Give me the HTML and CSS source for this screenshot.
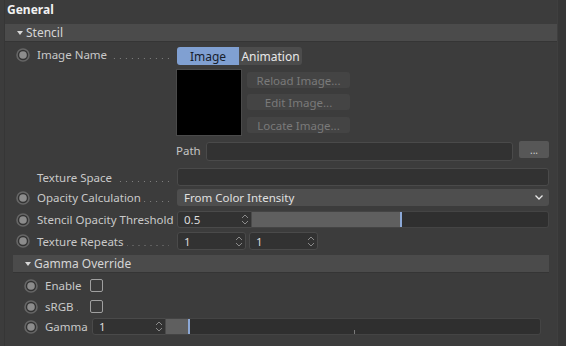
FILE: index.html
```html
<!DOCTYPE html>
<html>
<head>
<meta charset="utf-8">
<link rel="stylesheet" href="styles.css">
</head>
<body>
<div class="wrap">
  <div class="panel">
    <div class="title">General</div>

    <div class="ghead">
      <svg class="tri" width="6" height="4" viewBox="0 0 6 4"><path d="M0 0H6L3 4Z" fill="#d8d8d8"/></svg>
      <span>Stencil</span>
    </div>

    <div class="row r-img">
      <div class="lab lab-top">
        <svg class="radio" viewBox="0 0 14 14"><circle cx="7" cy="7" r="6" fill="#333" stroke="#666" stroke-width="1.6"/><circle cx="7" cy="7" r="3.8" fill="#8c8c8c"/></svg>
        <span class="name">Image Name</span><span class="dots"></span>
      </div>
      <div class="val">
        <div class="tabs">
          <div class="tab tab-on">Image</div>
          <div class="tab tab-off">Animation</div>
        </div>
      </div>
    </div>

    <div class="row r-body">
      <div class="lab"></div>
      <div class="val body">
        <div class="thumb"></div>
        <div class="btns">
          <div class="btn">Reload Image...</div>
          <div class="btn">Edit Image...</div>
          <div class="btn">Locate Image...</div>
        </div>
      </div>
    </div>

    <div class="row r-path">
      <div class="lab"></div>
      <div class="val path">
        <span class="plab">Path</span>
        <div class="field pfield"></div>
        <div class="more">...</div>
      </div>
    </div>

    <div class="row r-tex">
      <div class="lab">
        <span class="sp"></span>
        <span class="name">Texture Space</span><span class="dots"></span>
      </div>
      <div class="val"><div class="field wide"></div></div>
    </div>

    <div class="row r-opc">
      <div class="lab">
        <svg class="radio" viewBox="0 0 14 14"><circle cx="7" cy="7" r="6" fill="#333" stroke="#666" stroke-width="1.6"/><circle cx="7" cy="7" r="3.8" fill="#8c8c8c"/></svg>
        <span class="name">Opacity Calculation</span><span class="dots"></span>
      </div>
      <div class="val">
        <div class="drop">
          <span>From Color Intensity</span>
          <svg width="8" height="5" viewBox="0 0 8 5"><path d="M0.5 0.5L4 4L7.5 0.5" fill="none" stroke="#e8e8e8" stroke-width="1.3"/></svg>
        </div>
      </div>
    </div>

    <div class="row r-thr">
      <div class="lab">
        <svg class="radio" viewBox="0 0 14 14"><circle cx="7" cy="7" r="6" fill="#333" stroke="#666" stroke-width="1.6"/><circle cx="7" cy="7" r="3.8" fill="#8c8c8c"/></svg>
        <span class="name">Stencil Opacity Threshold</span>
      </div>
      <div class="val">
        <div class="num n-thr"><span>0.5</span>
          <svg class="spin" width="8" height="13" viewBox="0 0 8 13"><path d="M1 5L4 2L7 5M1 8L4 11L7 8" fill="none" stroke="#8a8a8a" stroke-width="1"/></svg>
        </div>
        <div class="slider s-thr">
          <div class="fill" style="width:148px"></div><div class="knob"></div>
        </div>
      </div>
    </div>

    <div class="row r-rep">
      <div class="lab">
        <svg class="radio" viewBox="0 0 14 14"><circle cx="7" cy="7" r="6" fill="#333" stroke="#666" stroke-width="1.6"/><circle cx="7" cy="7" r="3.8" fill="#8c8c8c"/></svg>
        <span class="name">Texture Repeats</span><span class="dots"></span>
      </div>
      <div class="val rep">
        <div class="num n-rep"><span>1</span>
          <svg class="spin" width="8" height="13" viewBox="0 0 8 13"><path d="M1 5L4 2L7 5M1 8L4 11L7 8" fill="none" stroke="#8a8a8a" stroke-width="1"/></svg>
        </div>
        <div class="num n-rep"><span>1</span>
          <svg class="spin" width="8" height="13" viewBox="0 0 8 13"><path d="M1 5L4 2L7 5M1 8L4 11L7 8" fill="none" stroke="#8a8a8a" stroke-width="1"/></svg>
        </div>
      </div>
    </div>

    <div class="sub">
      <div class="ghead shead">
        <svg class="tri" width="6" height="4" viewBox="0 0 6 4"><path d="M0 0H6L3 4Z" fill="#d8d8d8"/></svg>
        <span>Gamma Override</span>
      </div>

      <div class="row r-en">
        <div class="lab slab">
          <svg class="radio" viewBox="0 0 14 14"><circle cx="7" cy="7" r="6" fill="#333" stroke="#666" stroke-width="1.6"/><circle cx="7" cy="7" r="3.8" fill="#8c8c8c"/></svg>
          <span class="name">Enable</span><span class="dots sdots"></span>
        </div>
        <div class="chk"></div>
      </div>

      <div class="row r-srgb">
        <div class="lab slab">
          <svg class="radio" viewBox="0 0 14 14"><circle cx="7" cy="7" r="6" fill="#333" stroke="#666" stroke-width="1.6"/><circle cx="7" cy="7" r="3.8" fill="#8c8c8c"/></svg>
          <span class="name">sRGB</span><span class="dots sdots"></span>
        </div>
        <div class="chk"></div>
      </div>

      <div class="row r-gam">
        <div class="lab slab glab">
          <svg class="radio" viewBox="0 0 14 14"><circle cx="7" cy="7" r="6" fill="#333" stroke="#666" stroke-width="1.6"/><circle cx="7" cy="7" r="3.8" fill="#8c8c8c"/></svg>
          <span class="name">Gamma</span>
        </div>
        <div class="val gval">
          <div class="num n-gam"><span>1</span>
            <svg class="spin" width="8" height="13" viewBox="0 0 8 13"><path d="M1 5L4 2L7 5M1 8L4 11L7 8" fill="none" stroke="#8a8a8a" stroke-width="1"/></svg>
          </div>
          <div class="slider s-gam">
            <div class="fill" style="width:22px"></div><div class="knob"></div>
            <div class="tick"></div>
          </div>
        </div>
      </div>
    </div>
  </div>
  <div class="scroll"></div>
</div>
</body>
</html>
```

FILE: styles.css
```css
html, body {
  margin: 0;
  padding: 0;
}
body {
  width: 566px;
  height: 346px;
  overflow: hidden;
  background: #3c3c3c;
  font-family: "Noto Sans", "Open Sans", sans-serif;
  font-size: 11.5px;
  color: #c9c9c9;
}
.wrap {
  display: flex;
  height: 346px;
  padding-left: 4px;
  box-sizing: border-box;
}
.panel {
  width: 552px;
  border-left: 1px solid #363636;
  flex: none;
}
.scroll {
  flex: 1;
  background: #373737;
  border-left: 1px solid #3f3f3f;
}
.title {
  height: 24px;
  line-height: 20px;
  padding-left: 2px;
  font-weight: bold;
  font-size: 12px;
  color: #f2f2f2;
}
.ghead {
  height: 17px;
  background: #4b4b4b;
  border-bottom: 1px solid #353535;
  display: flex;
  align-items: center;
  padding-left: 12px;
  color: #d6d6d6;
  font-size: 12px;
}
.tri {
  margin-right: 3px;
}
.row {
  display: flex;
  align-items: center;
}
.lab {
  width: 172px;
  flex: none;
  display: flex;
  align-items: center;
  padding-left: 11px;
  box-sizing: border-box;
  white-space: nowrap;
}
.lab-top {
  align-self: flex-start;
  margin-top: 0px;
  height: 15px;
}
.radio {
  width: 14px;
  height: 14px;
  flex: none;
  margin-right: 7px;
}
.sp {
  width: 14px;
  margin-right: 7px;
  flex: none;
}
.dots {
  flex: 1;
  height: 1px;
  margin: 8px 8px 0 3px;
  background-image: linear-gradient(to left, #808080 1px, transparent 1px);
  background-size: 6px 1px;
  background-repeat: repeat-x;
  background-position: right top;
}
.val {
  width: 372px;
  flex: none;
  display: flex;
  align-items: center;
}

/* image name row */
.r-img { margin-top: 5px; }
.tabs {
  display: flex;
  height: 18px;
}
.tab {
  display: flex;
  align-items: center;
  justify-content: center;
  font-size: 12px;
}
.tab-on {
  width: 62px;
  background: #80a0d2;
  color: #17202c;
  border-radius: 3px 0 0 3px;
}
.tab-off {
  width: 63px;
  background: #4c4c4c;
  color: #e8e8e8;
  border-radius: 0 3px 3px 0;
}

/* image body */
.r-body { margin-top: 5px; }
.body { align-items: flex-start; }
.thumb {
  width: 64px;
  height: 65px;
  background: #000;
  box-shadow: 0 0 0 1px #4a4a4a;
  flex: none;
}
.btns {
  margin-left: 6px;
  padding-top: 2px;
  display: flex;
  flex-direction: column;
  gap: 6px;
}
.btn {
  width: 103px;
  height: 16px;
  background: #444444;
  border-radius: 3px;
  color: #7a7a7a;
  display: flex;
  align-items: center;
  justify-content: center;
}
.btn + .btn + .btn { margin-top: 1px; }

/* path */
.r-path { margin-top: 6px; height: 20px; }
.path { align-items: flex-start; height: 20px; }
.plab {
  width: 29px;
  flex: none;
  line-height: 20px;
  margin-left: -1px;
  padding-right: 1px;
  color: #c4c4c4;
}
.field {
  background: #323232;
  border: 1px solid #4a4a4a;
  border-radius: 3px;
  box-sizing: border-box;
}
.pfield {
  width: 307px;
  height: 19px;
  margin-top: 1px;
}
.more {
  width: 30px;
  height: 17px;
  margin-left: 6px;
  background: #575757;
  border-radius: 2px;
  color: #d0d0d0;
  font-size: 10px;
  display: flex;
  align-items: center;
  justify-content: center;
  line-height: 1;
}

/* texture space */
.r-tex { margin-top: 7px; height: 18px; }
.wide { width: 372px; height: 18px; }

/* opacity calc */
.r-opc { margin-top: 3px; height: 17px; }
.drop {
  width: 372px;
  height: 17px;
  background: #4e4e4e;
  border-radius: 3px;
  box-sizing: border-box;
  padding: 0 6px 0 7px;
  display: flex;
  align-items: center;
  justify-content: space-between;
  color: #e0e0e0;
}

/* numbers & sliders */
.num {
  height: 17px;
  background: #323232;
  border: 1px solid #4a4a4a;
  border-radius: 3px;
  box-sizing: border-box;
  display: flex;
  align-items: center;
  justify-content: space-between;
  padding: 0 2px 0 6px;
  color: #dcdcdc;
  flex: none;
}
.spin { flex: none; }
.slider {
  position: relative;
  height: 17px;
  background: #2f2f2f;
  border: 1px solid #444;
  border-left: none;
  border-radius: 0 3px 3px 0;
  box-sizing: border-box;
  display: flex;
  flex: none;
}
.fill {
  height: 100%;
  background: #5f5f5f;
}
.knob {
  width: 2px;
  height: 100%;
  background: #8ca8d6;
}
.tick {
  position: absolute;
  left: 188px;
  bottom: 0;
  width: 1px;
  height: 4px;
  background: #7a7a7a;
}
.r-thr { margin-top: 5px; height: 17px; }
.n-thr { width: 75px; border-radius: 3px 0 0 3px; }
.s-thr { width: 297px; }

.r-rep { margin-top: 4px; height: 18px; }
.rep { gap: 3px; }
.n-rep { width: 69px; height: 18px; }

/* gamma subgroup */
.sub {
  margin: 5px 8px 0 8px;
}
.shead {
  padding-left: 12px;
}
.slab {
  width: 77px;
}
.sdots {
  margin-right: 12px;
}
.glab { width: 79px; }
.chk {
  width: 13px;
  height: 13px;
  box-sizing: border-box;
  border: 1px solid #a0a0a0;
  border-radius: 2px;
}
.r-en { margin-top: 6px; height: 13px; }
.r-srgb { margin-top: 8px; height: 13px; }
.r-gam { margin-top: 5px; height: 17px; }
.gval { width: auto; }
.n-gam { width: 74px; border-radius: 3px 0 0 3px; }
.s-gam { width: 375px; }
```
